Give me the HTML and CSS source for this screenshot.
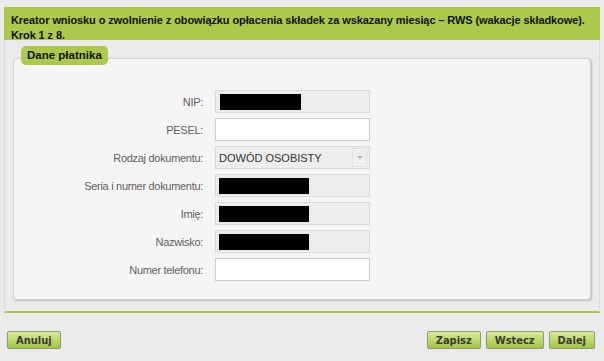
FILE: index.html
```html
<!DOCTYPE html>
<html lang="pl">
<head>
    <meta charset="UTF-8">
    <meta name="viewport" content="width=device-width, initial-scale=1.0">
    <title>Kreator wniosku RWS</title>
    <link rel="stylesheet" href="styles.css">
</head>
<body>

    <div class="wizard">
        <div class="wizard-title">Kreator wniosku o zwolnienie z obowiązku opłacenia składek za wskazany miesiąc – RWS (wakacje składkowe). Krok 1 z 8.</div>

        <div class="wizard-body">
            <!-- Dane płatnika -->
            <div class="panel">
                <div class="panel-title">Dane płatnika</div>

                <div class="form-row">
                    <label>NIP:</label>
                    <div class="field disabled"><span class="redacted short"></span></div>
                </div>
                <div class="form-row">
                    <label for="pesel">PESEL:</label>
                    <input type="text" id="pesel" class="field">
                </div>
                <div class="form-row">
                    <label>Rodzaj dokumentu:</label>
                    <div class="field disabled select">
                        <span>DOWÓD OSOBISTY</span>
                        <span class="select-btn"></span>
                    </div>
                </div>
                <div class="form-row">
                    <label>Seria i numer dokumentu:</label>
                    <div class="field disabled"><span class="redacted"></span></div>
                </div>
                <div class="form-row">
                    <label>Imię:</label>
                    <div class="field disabled"><span class="redacted"></span></div>
                </div>
                <div class="form-row">
                    <label>Nazwisko:</label>
                    <div class="field disabled"><span class="redacted"></span></div>
                </div>
                <div class="form-row">
                    <label for="phone">Numer telefonu:</label>
                    <input type="text" id="phone" class="field">
                </div>
            </div>
        </div>

        <div class="buttons">
            <button class="btn">Anuluj</button>
            <div class="buttons-right">
                <button class="btn">Zapisz</button>
                <button class="btn">Wstecz</button>
                <button class="btn">Dalej</button>
            </div>
        </div>
    </div>

</body>
</html>
```

FILE: styles.css
```css
body {
    font-family: "Liberation Sans", Arial, sans-serif;
    font-size: 11px;
    background-color: #ebebeb;
    margin: 0;
    padding: 7px 4px 0 4px;
}
.wizard-title {
    background-color: #abc94a;
    color: #111;
    font-weight: bold;
    font-size: 11px;
    letter-spacing: -0.1px;
    line-height: 15px;
    padding: 6px 4px 0 7px;
    height: 27px;
}
.wizard-body {
    border-left: 1px solid #dcdcdc;
    border-right: 1px solid #dcdcdc;
    border-bottom: 2px solid #abc94a;
    padding: 18px 8px 11px 8px;
}
.panel {
    background-color: #f5f5f5;
    border: 1px solid #d2d2d2;
    border-radius: 4px;
    box-shadow: 1px 1px 2px #bdbdbd;
    height: 240px;
}
.panel-title {
    display: block;
    width: fit-content;
    margin: -13px 0 25px 7px;
    background-color: #abc94a;
    border-radius: 5px;
    color: #111;
    font-weight: bold;
    font-size: 11.5px;
    line-height: 19px;
    padding: 0 6px;
}
.form-row {
    display: flex;
    align-items: center;
    height: 23px;
    margin-bottom: 5px;
}
.form-row label {
    width: 189px;
    text-align: right;
    color: #5f5f5f;
    letter-spacing: -0.3px;
    padding-right: 12px;
}
.field {
    box-sizing: border-box;
    width: 155px;
    height: 23px;
    border: 1px solid #c9ced3;
    background-color: #fff;
    margin: 0;
    padding: 0 3px;
    font-family: inherit;
    font-size: 11px;
}
.field.disabled {
    background-color: #ededed;
    border-color: #dadada;
    display: flex;
    align-items: center;
}
.redacted {
    display: block;
    width: 90px;
    height: 16px;
    background-color: #000;
}
.redacted.short {
    width: 81px;
    margin-left: 1px;
}
.select {
    justify-content: space-between;
    color: #333;
    padding-right: 2px;
}
.select-btn {
    width: 13px;
    height: 17px;
    border: 1px solid #e2e2e2;
    background-color: #efefef;
    position: relative;
}
.select-btn::after {
    content: "";
    position: absolute;
    left: 4px;
    top: 7px;
    border-left: 3px solid transparent;
    border-right: 3px solid transparent;
    border-top: 3px solid #b5b5b5;
}
.buttons {
    display: flex;
    justify-content: space-between;
    padding: 18px 5px 0 3px;
}
.buttons-right {
    display: flex;
    gap: 5px;
}
.btn {
    height: 18px;
    padding: 0 8px;
    border: 1px solid #8e9a78;
    border-radius: 2px;
    background: linear-gradient(#d8ea97, #a2c642);
    box-shadow: 0 1px 1px #c2c2c2;
    color: #3a3a3a;
    font-family: "DejaVu Sans Condensed", "DejaVu Sans", sans-serif;
    font-weight: bold;
    font-size: 11px;
    cursor: pointer;
}
.btn:hover {
    background: linear-gradient(#e2f0ad, #abc94a);
}
```
